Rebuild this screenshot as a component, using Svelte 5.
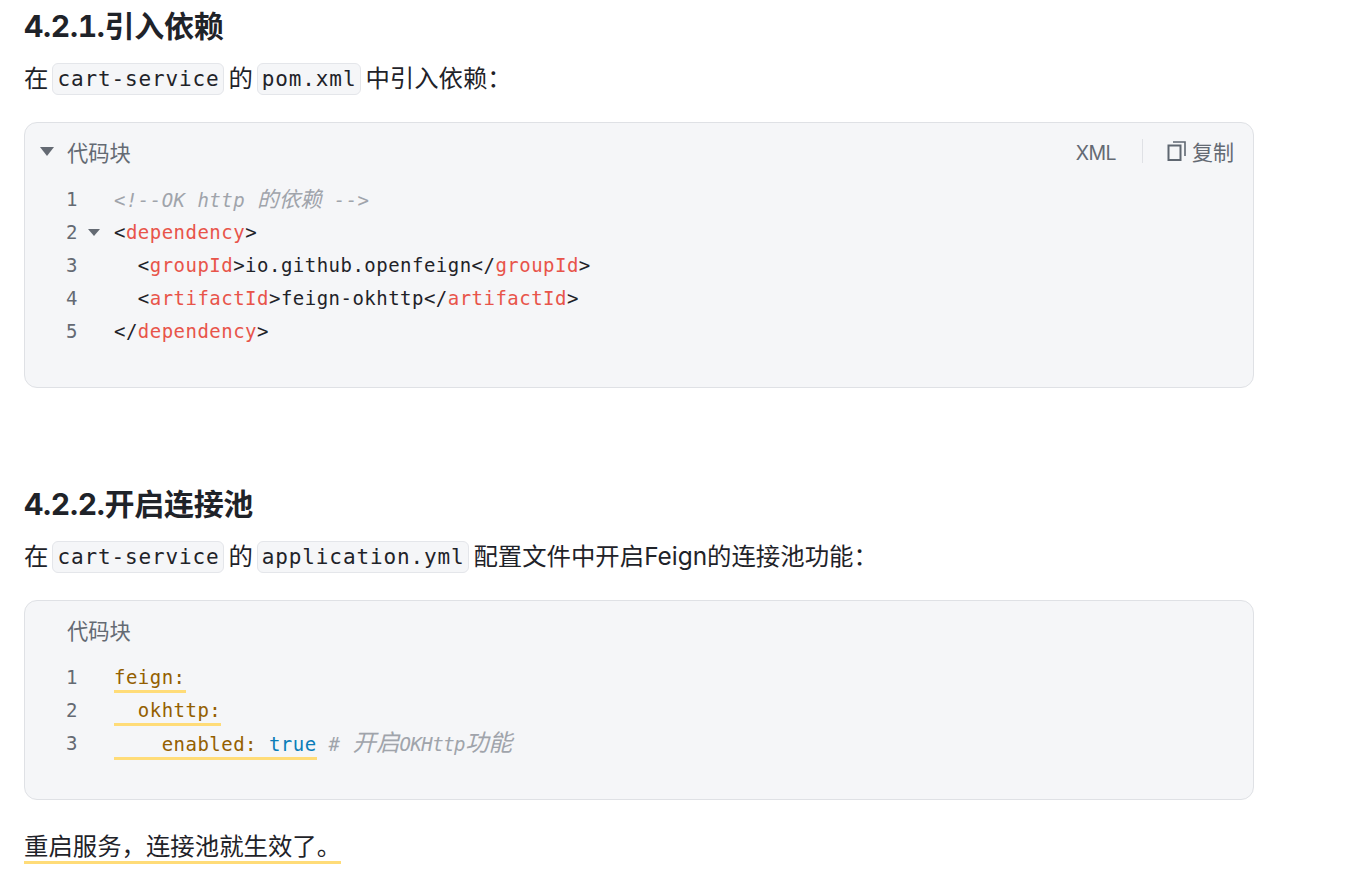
<script>
  const xml = [
    { n: 1, t: [["c", "<!--OK http "], ["c zh", "的依赖"], ["c", " -->"]] },
    { n: 2, fold: true, t: [["", "<"], ["r", "dependency"], ["", ">"]] },
    { n: 3, t: [["", "  <"], ["r", "groupId"], ["", ">io.github.openfeign</"], ["r", "groupId"], ["", ">"]] },
    { n: 4, t: [["", "  <"], ["r", "artifactId"], ["", ">feign-okhttp</"], ["r", "artifactId"], ["", ">"]] },
    { n: 5, t: [["", "</"], ["r", "dependency"], ["", ">"]] }
  ];

  const yml = [
    { n: 1, t: [["y", "feign:"]] },
    { n: 2, t: [["y", "  okhttp:"]] },
    { n: 3, t: [["y", "    enabled: "], ["b", "true"]], rest: true }
  ];
</script>

<main class="page">
  <h2 class="first">4.2.1.引入依赖</h2>
  <p class="intro">在<code>cart-service</code>的<code>pom.xml</code>中引入依赖：</p>

  <section class="block xml">
    <header>
      <span class="caret"></span>
      <span class="name">代码块</span>
      <span class="tools">
        <span class="lang">XML</span>
        <span class="sep"></span>
        <svg width="20" height="22" viewBox="0 0 20 22" fill="none" stroke="#5f6771" stroke-width="2">
          <rect x="1.5" y="5.5" width="12" height="14.5" />
          <path d="M6 2h12v14" stroke-width="1.6" />
        </svg>
        <span class="copy">复制</span>
      </span>
    </header>
    <div class="code">
      {#each xml as line}
        <div class="line">
          <span class="num">{line.n}</span>
          <span class="fold">{#if line.fold}<i></i>{/if}</span>
          <span class="src">{#each line.t as [k, s]}<span class={k}>{s}</span>{/each}</span>
        </div>
      {/each}
    </div>
  </section>

  <h2>4.2.2.开启连接池</h2>
  <p class="intro two">在<code>cart-service</code>的<code>application.yml</code>配置文件中开启Feign的连接池功能：</p>

  <section class="block yml">
    <header>
      <span class="name">代码块</span>
    </header>
    <div class="code">
      {#each yml as line}
        <div class="line">
          <span class="num">{line.n}</span>
          <span class="fold"></span>
          <span class="src"><span class="mark">{#each line.t as [k, s]}<span class={k}>{s}</span>{/each}</span>{#if line.rest}<span class="c">{" # "}<span class="zh big">开启</span><span class="tight">OKHttp</span><span class="zh big">功能</span></span>{/if}</span>
        </div>
      {/each}
    </div>
  </section>

  <p class="last"><span class="done">重启服务，连接池就生效了。</span></p>
</main>

<style>
  :global(body) {
    background: #fff;
  }

  .page {
    padding: 8px 0 0 24px;
    width: 1230px;
    color: #1f2329;
    font-family: "Inter", "Noto Sans CJK SC", sans-serif;
  }

  h2 {
    margin: 98px 0 0;
    font-size: 30px;
    line-height: 36px;
    font-weight: 700;
    letter-spacing: -0.3px;
    font-variant-numeric: tabular-nums;
    color: #1f2329;
  }

  h2.first {
    margin-top: 0;
  }

  p {
    margin: 15px 0 0;
    font-size: 24.4px;
    line-height: 38px;
    height: 38px;
  }

  code {
    display: inline-block;
    margin: 0 4px;
    font-family: "DejaVu Sans Mono", monospace;
    font-size: 21px;
    line-height: 30px;
    letter-spacing: 0.86px;
    padding: 0 4px;
    background: #f5f6f8;
    border: 1px solid #e4e6ea;
    border-radius: 6px;
    vertical-align: 1px;
  }

  .block {
    margin-top: 25px;
    background: #f5f6f8;
    border: 1px solid #dfe1e5;
    border-radius: 13px;
    box-sizing: border-box;
  }

  .block.xml {
    height: 266px;
  }

  .block.yml {
    height: 200px;
  }

  header {
    display: flex;
    align-items: center;
    height: 30px;
    margin-top: 13px;
    padding: 0 19px 0 15px;
    color: #646a73;
    font-size: 21.3px;
  }

  .yml header {
    padding-left: 42px;
  }

  .caret {
    width: 0;
    height: 0;
    margin-right: 13px;
    border-left: 7px solid transparent;
    border-right: 7px solid transparent;
    border-top: 9px solid #646a73;
  }

  .tools {
    display: flex;
    align-items: center;
    margin-left: auto;
  }

  .lang {
    padding-top: 3px;
    font-size: 19.5px;
    letter-spacing: -0.6px;
  }

  .sep {
    width: 1px;
    height: 24px;
    margin: 0 24px 0 26px;
    background: #dfe1e5;
  }

  .copy {
    margin-left: 5px;
    font-size: 21px;
  }

  .code {
    margin-top: 17px;
    font-family: "DejaVu Sans Mono", "Noto Sans CJK SC", monospace;
    font-size: 19px;
    line-height: 33px;
    letter-spacing: 0.48px;
    color: #1f2329;
  }

  .line {
    display: flex;
    height: 33px;
    padding-left: 41px;
  }

  .num {
    width: 21px;
    color: #646a73;
    letter-spacing: 0;
  }

  .fold {
    width: 27px;
    display: flex;
    align-items: center;
    padding-left: 1px;
    box-sizing: border-box;
  }

  .fold i {
    width: 0;
    height: 0;
    border-left: 6px solid transparent;
    border-right: 6px solid transparent;
    border-top: 7px solid #646a73;
  }

  .src {
    white-space: pre;
  }

  .r {
    color: #e8544a;
  }

  .c {
    color: #a0a4ab;
    font-style: italic;
  }

  .zh {
    font-size: 21.6px;
    letter-spacing: 0;
  }

  .zh.big {
    font-size: 23.6px;
  }

  .tight {
    font-size: 19px;
    letter-spacing: -0.55px;
  }

  .y {
    color: #945f00;
  }

  .b {
    color: #0a7db8;
  }

  .mark {
    padding-bottom: 2px;
    border-bottom: 3px solid #ffdc78;
  }

  .done {
    display: inline-block;
    line-height: 30px;
    border-bottom: 3px solid #ffdc78;
  }

  .last {
    margin-top: 27px;
  }
</style>
